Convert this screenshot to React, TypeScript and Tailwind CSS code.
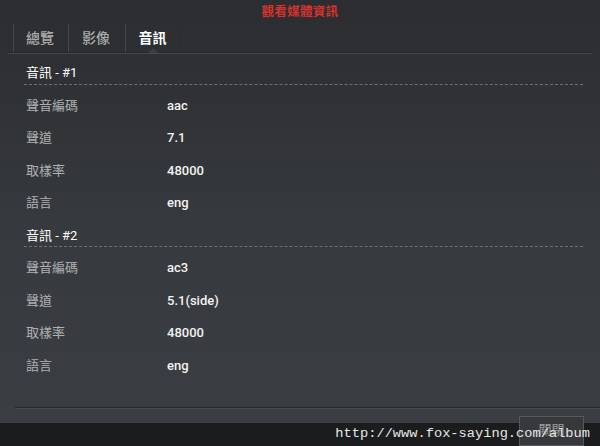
import React from 'react';

type Row = { label: string; value: string };

const streams: { title: string; rows: Row[] }[] = [
  {
    title: '音訊 - #1',
    rows: [
      { label: '聲音編碼', value: 'aac' },
      { label: '聲道', value: '7.1' },
      { label: '取樣率', value: '48000' },
      { label: '語言', value: 'eng' },
    ],
  },
  {
    title: '音訊 - #2',
    rows: [
      { label: '聲音編碼', value: 'ac3' },
      { label: '聲道', value: '5.1(side)' },
      { label: '取樣率', value: '48000' },
      { label: '語言', value: 'eng' },
    ],
  },
];

const tabs = [
  { name: '總覽', width: 'w-[55px]', active: false },
  { name: '影像', width: 'w-[57px]', active: false },
  { name: '音訊', width: 'w-[56px]', active: true },
];

const App: React.FC = () => {
  return (
    <div
      className="relative w-[600px] h-[446px] overflow-hidden bg-gradient-to-b from-[#2b2d30] via-[#36393d] to-[#3b3e42]"
      style={{ fontFamily: 'Roboto, "Noto Sans CJK TC", sans-serif' }}
    >
      {/* title */}
      <div className="h-[24px] flex items-center justify-center text-[12.5px] font-bold text-[#d9322c] tracking-wide">
        觀看媒體資訊
      </div>

      {/* tabs */}
      <div className="mx-[8px] h-[29px] flex border-b border-[#25272a] shadow-[0_1px_0_#45484c]">
        <div className="w-[4px]" />
        {tabs.map((t) => (
          <div
            key={t.name}
            className={`relative ${t.width} flex items-center justify-center pt-[1px] border-l border-[#2a2c2f] shadow-[inset_1px_0_0_#45484c] text-[14px] ${
              t.active ? 'text-white font-bold' : 'text-[#a9abad] font-medium'
            }`}
          >
            {t.name}
            {t.active && (
              <span className="absolute bottom-[-1px] left-1/2 -translate-x-1/2 w-0 h-0 border-x-[5px] border-x-transparent border-b-[5px] border-b-[#3a3d41]" />
            )}
          </div>
        ))}
        <div className="border-l border-[#2a2c2f] shadow-[inset_1px_0_0_#45484c]" />
      </div>

      {/* content */}
      <div className="pl-[26px] pr-[17px] pt-[9px] flex flex-col gap-[5px]">
        {streams.map((s) => (
          <div key={s.title}>
            <div className="h-[22px] flex items-center text-[13px] text-white">{s.title}</div>
            <div className="-ml-[2px] border-t border-dashed border-[#6c6f73]" />
            <div className="pt-[4px]">
              {s.rows.map((r) => (
                <div key={r.label} className="h-[32.6px] flex items-center text-[13px]">
                  <span className="w-[141px] text-[#aeb0b2]">{r.label}</span>
                  <span className="text-[#f2f2f2] font-medium">{r.value}</span>
                </div>
              ))}
            </div>
          </div>
        ))}
      </div>

      {/* footer */}
      <div className="absolute left-[15px] right-0 top-[407px] border-t border-[#26282b] shadow-[0_1px_0_#494c50]" />

      {/* watermark band */}
      <div className="absolute left-0 right-0 top-[423px] h-[23px] bg-[#1b1c1e]" />
      <div className="absolute left-[519px] top-[416px] w-[65px] h-[30px] border border-[#55585c] bg-[#36383b] flex justify-center pt-[3px] text-[13px] text-[#9a9c9e]">
        關閉
      </div>
      <div className="absolute left-0 right-0 top-[423px] h-[23px] flex items-center justify-end pr-[10px]">
        <span
          className="text-[13.7px] text-[#e6e6e6]"
          style={{ fontFamily: '"Liberation Mono", monospace' }}
        >
          http://www.fox-saying.com/album
        </span>
      </div>
    </div>
  );
};

export default App;
